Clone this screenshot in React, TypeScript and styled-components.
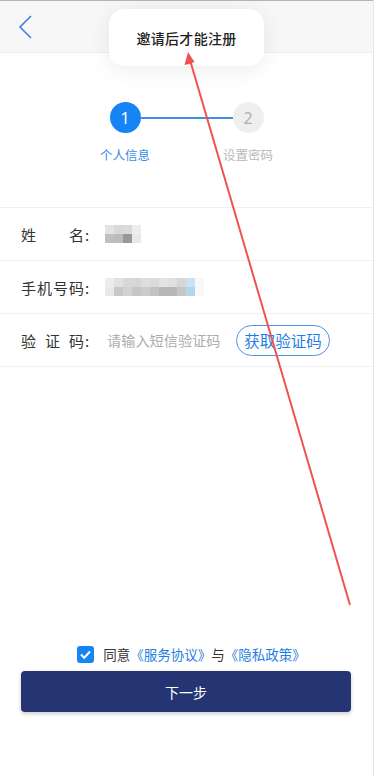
import React from "react";
import styled, { createGlobalStyle } from "styled-components";

const Global = createGlobalStyle`
  html, body { margin: 0; padding: 0; background: #fff; }
  body { font-family: "Noto Sans CJK SC", "Noto Sans", sans-serif; }
  * { box-sizing: border-box; }
`;

const Page = styled.div`
  position: relative;
  width: 374px;
  height: 777px;
  display: flex;
  flex-direction: column;
  background: #fff;
  border-right: 1px solid #e6e6e6;
  overflow: hidden;
`;

const Header = styled.div`
  height: 53px;
  flex: none;
  display: flex;
  align-items: center;
  padding-left: 18px;
  background: #f7f7f7;
  border-top: 1px solid #b4b4b4;
  border-bottom: 1px solid #ececec;
`;

const Toast = styled.div`
  position: absolute;
  left: 109px;
  top: 9px;
  width: 155px;
  height: 57px;
  border-radius: 15px;
  background: #fff;
  box-shadow: 0 3px 22px rgba(0, 0, 0, 0.08);
  display: flex;
  align-items: center;
  justify-content: center;
  font-size: 14px;
  font-weight: 500;
  color: #222;
  letter-spacing: 0.3px;
`;

const Steps = styled.div`
  flex: none;
  display: flex;
  justify-content: center;
  padding-top: 49px;
  height: 155px;
  border-bottom: 1px solid #f0f0f0;
`;

const Step = styled.div`
  display: flex;
  flex-direction: column;
  align-items: center;
  width: 60px;
`;

const Circle = styled.div<{ $active?: boolean }>`
  width: 31px;
  height: 31px;
  border-radius: 50%;
  display: flex;
  align-items: center;
  justify-content: center;
  font-family: "Noto Sans", sans-serif;
  font-size: 16px;
  background: ${(p) => (p.$active ? "#1684f5" : "#efefef")};
  color: ${(p) => (p.$active ? "#fff" : "#b0b0b0")};
`;

const StepLabel = styled.div<{ $active?: boolean }>`
  margin-top: 12px;
  font-size: 12.5px;
  color: ${(p) => (p.$active ? "#3b8de6" : "#b8b8b8")};
  white-space: nowrap;
`;

const Connector = styled.div`
  width: 93px;
  height: 2px;
  margin-top: 14.5px;
  margin-left: -15px;
  margin-right: -15px;
  background: #3f8fe6;
`;

const Row = styled.div`
  flex: none;
  height: 53px;
  display: flex;
  align-items: center;
  padding-left: 21px;
  border-bottom: 1px solid #f0f0f0;
`;

const Label = styled.div`
  display: flex;
  align-items: center;
  width: 84px;
  font-size: 15px;
  color: #333;
  flex: none;
`;

const LabelChars = styled.div`
  display: flex;
  justify-content: space-between;
  width: 63px;
`;

const Colon = styled.span`
  margin-left: 1px;
`;

const Placeholder = styled.div`
  margin-left: 2px;
  font-size: 14.2px;
  color: #adadad;
  flex: 1;
`;

const CodeButton = styled.button`
  width: 94px;
  height: 31px;
  margin-right: 43px;
  border: 1px solid #4f97e6;
  border-radius: 16px;
  background: #fff;
  color: #1f7fe3;
  font-family: "Noto Sans CJK SC", sans-serif;
  font-size: 15.5px;
  padding: 0;
`;

const Mosaic = styled.div<{ $cols: number }>`
  display: grid;
  grid-template-columns: repeat(${(p) => p.$cols}, 9px);
  grid-auto-rows: 9px;
  filter: blur(0.5px);
`;

const Cell = styled.div<{ $c: string }>`
  background: ${(p) => p.$c};
`;

const Spacer = styled.div`
  flex: 1;
`;

const Agree = styled.div`
  flex: none;
  display: flex;
  align-items: center;
  justify-content: center;
  gap: 9px;
  padding-left: 10px;
  height: 18px;
  margin-bottom: 8px;
  font-size: 13.5px;
  color: #333;
`;

const Check = styled.div`
  width: 17px;
  height: 17px;
  border-radius: 3px;
  background: #1684f5;
  display: flex;
  align-items: center;
  justify-content: center;
`;

const Link = styled.span`
  color: #1f7fe3;
`;

const NextButton = styled.button`
  flex: none;
  margin: 0 22px 65px 21px;
  height: 41px;
  border: none;
  border-radius: 4px;
  background: #253472;
  color: #fff;
  font-family: "Noto Sans CJK SC", sans-serif;
  font-size: 14px;
  box-shadow: 0 2px 4px rgba(0, 0, 0, 0.2);
`;

const Annotation = styled.svg`
  position: absolute;
  left: 0;
  top: 0;
  pointer-events: none;
`;

const nameCells = [
  "#e4e4e4", "#d8d8d8", "#dadada", "#ededed",
  "#c0c0c0", "#bcbcbc", "#989898", "#e8e8e8",
];
const phoneCells = [
  "#ececec", "#e2e2e2", "#d8d8d8", "#d6d6d6", "#dedede", "#dadada", "#e4e4e4", "#e0e0e0", "#d6d6d6", "#cbe0f0", "#f8f8f8",
  "#e8e8e8", "#c8c8c8", "#d2d2d2", "#c6c6c6", "#cccccc", "#c2c2c2", "#b8b8b8", "#b8b8b8", "#c6c6c6", "#b6d4ea", "#f8f8f8",
];

export default function App() {
  return (
    <>
      <Global />
      <Page>
        <Header>
          <svg width="16" height="26" viewBox="0 0 16 26">
            <path d="M13 2 L2 13 L13 24" fill="none" stroke="#3b83e6" strokeWidth="1.6" />
          </svg>
        </Header>
        <Toast>邀请后才能注册</Toast>
        <Steps>
          <Step>
            <Circle $active>1</Circle>
            <StepLabel $active>个人信息</StepLabel>
          </Step>
          <Connector />
          <Step>
            <Circle>2</Circle>
            <StepLabel>设置密码</StepLabel>
          </Step>
        </Steps>
        <Row>
          <Label>
            <LabelChars>
              <span>姓</span>
              <span>名</span>
            </LabelChars>
            <Colon>:</Colon>
          </Label>
          <Mosaic $cols={4}>
            {nameCells.map((c, i) => (
              <Cell key={i} $c={c} />
            ))}
          </Mosaic>
        </Row>
        <Row>
          <Label>
            <LabelChars>
              <span>手</span>
              <span>机</span>
              <span>号</span>
              <span>码</span>
            </LabelChars>
            <Colon>:</Colon>
          </Label>
          <Mosaic $cols={11}>
            {phoneCells.map((c, i) => (
              <Cell key={i} $c={c} />
            ))}
          </Mosaic>
        </Row>
        <Row>
          <Label>
            <LabelChars>
              <span>验</span>
              <span>证</span>
              <span>码</span>
            </LabelChars>
            <Colon>:</Colon>
          </Label>
          <Placeholder>请输入短信验证码</Placeholder>
          <CodeButton>获取验证码</CodeButton>
        </Row>
        <Spacer />
        <Agree>
          <Check>
            <svg width="13" height="13" viewBox="0 0 13 13">
              <path d="M2 6.5 L5.2 9.7 L11 3.5" fill="none" stroke="#fff" strokeWidth="2" />
            </svg>
          </Check>
          <span>
            同意<Link>《服务协议》</Link>与<Link>《隐私政策》</Link>
          </span>
        </Agree>
        <NextButton>下一步</NextButton>
        <Annotation width="374" height="777" viewBox="0 0 374 777">
          <line x1="350" y1="605" x2="190" y2="60" stroke="#ef5350" strokeWidth="2" />
          <path d="M188 52 L184.5 65 L191 63.5 L194.5 62 Z" fill="#ef5350" />
        </Annotation>
      </Page>
    </>
  );
}
